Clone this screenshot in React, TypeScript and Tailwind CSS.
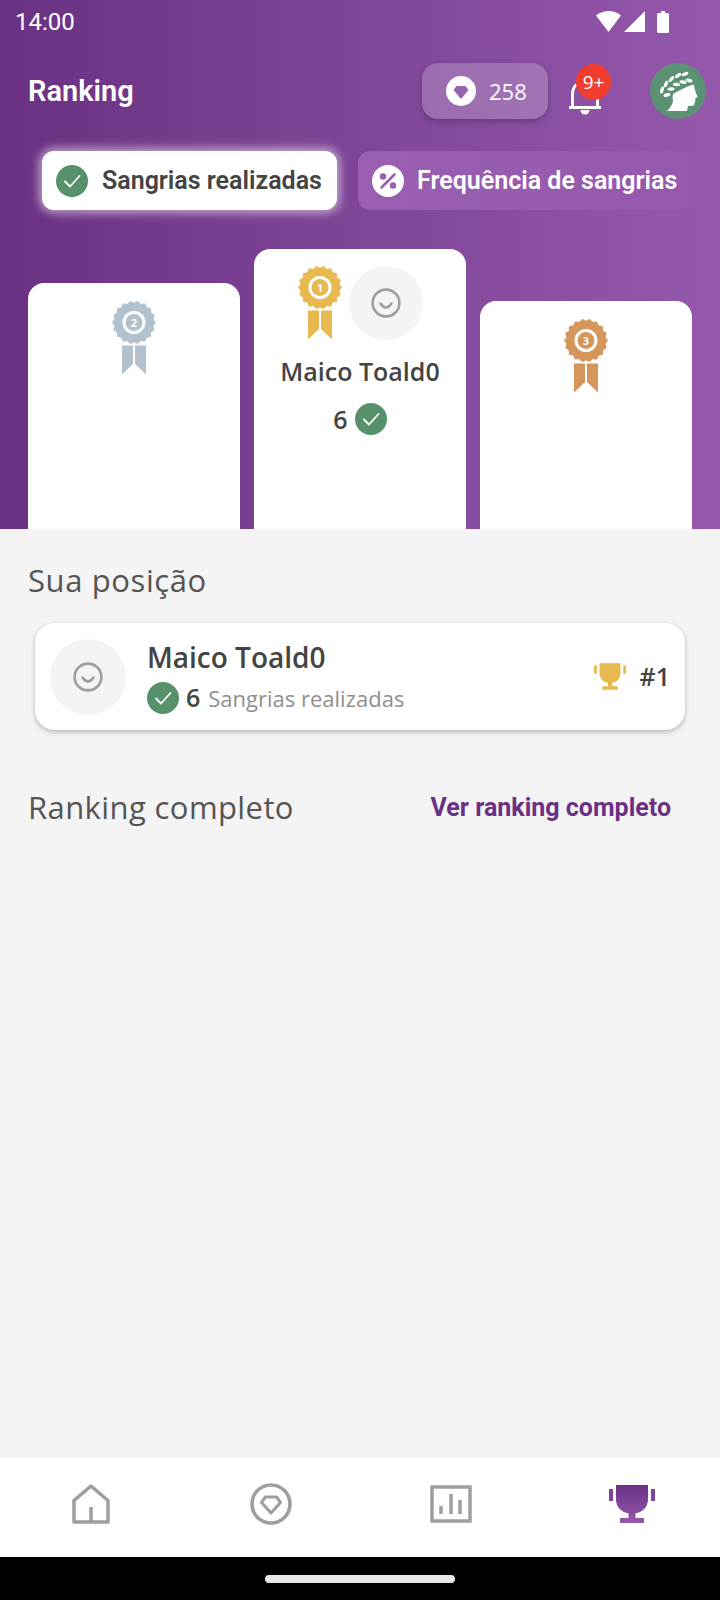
import React from 'react';

const roboto = "font-['Roboto',sans-serif]";
const soft = "font-['Open_Sans',sans-serif]";

// scalloped edge for the medals
const scallop = (cx: number, cy: number, r: number, bumps: number) => {
    const pts: string[] = [];
    for (let i = 0; i < bumps * 2; i++) {
        const a = (Math.PI * i) / bumps;
        const rr = i % 2 === 0 ? r : r - 2.2;
        pts.push(`${(cx + rr * Math.cos(a)).toFixed(2)},${(cy + rr * Math.sin(a)).toFixed(2)}`);
    }
    return pts.join(' ');
};

const Medal: React.FC<{ color: string; rank: number }> = ({ color, rank }) => (
    <svg width="44" height="74" viewBox="0 0 44 74" className="shrink-0">
        <path d="M10 44.500h11v18.500l-11 10.500z M23 44.500h11v29l-11-10.500z" fill={color} />
        <polygon points={scallop(22, 21.5, 21.5, 18)} fill={color} stroke={color} strokeWidth="1" strokeLinejoin="round" />
        <circle cx="22" cy="21.5" r="10" fill="none" stroke="#fff" strokeWidth="3" />
        <text x="22" y="25.500" textAnchor="middle" fontSize="11" fontWeight="700" fill="#fff" fontFamily="Open Sans, sans-serif">{rank}</text>
    </svg>
);

const CheckBadge: React.FC<{ size?: number }> = ({ size = 32 }) => (
    <svg width={size} height={size} viewBox="0 0 32 32" className="shrink-0">
        <circle cx="16" cy="16" r="16" fill="#56916c" />
        <path d="M9 16.500l5 5 9.500-10.500" fill="none" stroke="#fff" strokeWidth="1.800" strokeLinecap="round" strokeLinejoin="round" />
    </svg>
);

const Face: React.FC<{ size: number }> = ({ size }) => (
    <svg width={size} height={size} viewBox="0 0 30 30">
        <circle cx="15" cy="15" r="13.400" fill="none" stroke="#9e9e9e" strokeWidth="2.600" />
        <path d="M9.500 15.500q5.500 8 11 0" fill="none" stroke="#9e9e9e" strokeWidth="2.600" strokeLinecap="round" />
    </svg>
);

const TrophyIcon: React.FC<{ w: number; h: number; fill: string }> = ({ w, h, fill }) => (
    <svg width={w} height={h} viewBox="0 0 46 38">
        <path d="M8 0h30v14c0 8-5 13-12 14.500V33h8v5H12v-5h8v-4.500C13 27 8 22 8 14z" fill={fill} />
        <rect x="0" y="3" width="4" height="12" fill={fill} />
        <rect x="42" y="3" width="4" height="12" fill={fill} />
    </svg>
);

// laurel: outer row then inner row of leaves
const leaves = [
    [4, 20, -75], [8, 14, -65], [13.500, 9, -50], [20, 5.500, -35], [27, 4, -20],
    [9, 25, -15], [13, 19, -5], [18.500, 14.500, 5], [25, 12, 10], [31, 10.500, 15],
];

const Caesar = () => (
    <svg width="40" height="42" viewBox="0 0 40 42" fill="#fff">
        <path d="M15 24C22 20 30 16 36 14.500L36.500 18C37 21 39 25 39.500 27L37 28.500 37.500 31 36.500 32.500V34C36 36 34 36 30 36L29 41H9C11 39 14 36 15 31 14.500 28 14.500 26 15 24z" />
        {leaves.map(([x, y, r], i) => (
            <ellipse key={i} cx={x} cy={y} rx="3.600" ry="1.700" transform={`rotate(${r} ${x} ${y})`} />
        ))}
    </svg>
);

export default function App() {
    return (
        <div className={`w-[720px] h-[1600px] flex flex-col bg-[#f4f4f4] overflow-hidden ${soft}`}>
            <div className="h-[529px] flex flex-col bg-gradient-to-r from-[#6a3183] to-[#9559ac]">
                {/* status bar */}
                <div className="h-[44px] flex items-center justify-between pl-[15px] pr-[48px] text-white">
                    <span className={`${roboto} text-[24px] leading-none`}>14:00</span>
                    <svg width="76" height="24" viewBox="0 0 76 24" fill="#fff">
                        <path d="M0 5.500C3.500 2.500 8 1 12.500 1S21.500 2.500 25 5.500L12.500 22z" />
                        <path d="M28 22 L49 1 V22z" />
                        <path d="M61 4.500a1.500 1.500 0 0 1 1.500-1.500H65V1h4v2h2.500A1.500 1.500 0 0 1 73 4.500V21.500a1.500 1.500 0 0 1-1.500 1.500h-9a1.500 1.500 0 0 1-1.500-1.500z" />
                    </svg>
                </div>
                {/* title row */}
                <div className="mt-[19px] flex items-center pl-[28px] pr-[14px]">
                    <h1 className={`${roboto} text-[29px] font-semibold text-white leading-none`}>Ranking</h1>
                    <div className="ml-auto w-[126px] h-[56px] flex items-center pl-[24px] gap-[13px] rounded-[16px] bg-white/20 shadow-[0_3px_6px_rgba(0,0,0,0.22)]">
                        <svg width="30" height="30" viewBox="0 0 30 30">
                            <circle cx="15" cy="15" r="15" fill="#fff" />
                            <path d="M10.500 10h9l3 4-7.500 9-7.500-9z" fill="#9565ae" />
                        </svg>
                        <span className="text-[22px] font-medium text-white">258</span>
                    </div>
                    <div className="relative ml-[21px] w-[32px] h-[46px] mt-[6px]">
                        <svg width="32" height="36" viewBox="0 0 32 36" fill="none" className="absolute left-0 top-[8px]">
                            <path d="M3.500 28V15C3.500 7 9 3 16 3s12.500 4 12.500 12V28" stroke="#fff" strokeWidth="3" />
                            <path d="M0 28.500h32" stroke="#fff" strokeWidth="3" />
                            <path d="M11.500 31h9a4.500 4.500 0 0 1-9 0z" fill="#fff" />
                        </svg>
                        <span className="absolute left-[7px] top-[-7px] w-[35px] h-[36px] rounded-full bg-[#f03d30] flex items-center justify-center text-white text-[19px] leading-none">9+</span>
                    </div>
                    <div className="ml-[49px] w-[56px] h-[56px] rounded-full bg-[#5c9274] flex items-center justify-center shrink-0">
                        <Caesar />
                    </div>
                </div>
                {/* tabs */}
                <div className="mt-[32px] flex pl-[42px] gap-[21px]">
                    <div className="w-[295px] h-[59px] rounded-[12px] bg-white flex items-center pl-[14px] gap-[14px] shadow-[0_0_10px_3px_rgba(255,255,255,0.55)] shrink-0">
                        <CheckBadge />
                        <span className={`${roboto} text-[25px] font-semibold text-[#444] leading-none whitespace-nowrap`}>Sangrias realizadas</span>
                    </div>
                    <div className="w-[340px] h-[59px] rounded-[12px] bg-gradient-to-r from-[#9a5fb0] to-[#9559ac] flex items-center pl-[14px] gap-[13px] shrink-0">
                        <svg width="32" height="32" viewBox="0 0 32 32" className="shrink-0">
                            <circle cx="16" cy="16" r="16" fill="#fff" />
                            <path d="M9.500 22.500l13-13" stroke="#9a5fb0" strokeWidth="2.600" strokeLinecap="round" />
                            <circle cx="11" cy="11.500" r="3.200" fill="#9a5fb0" />
                            <circle cx="21" cy="20.500" r="3.200" fill="#9a5fb0" />
                        </svg>
                        <span className={`${roboto} text-[25px] font-semibold text-white leading-none whitespace-nowrap`}>Frequência de sangrias</span>
                    </div>
                </div>
                {/* podium */}
                <div className="flex-1 flex items-end gap-[14px] px-[28px]">
                    <div className="w-[212px] h-[246px] rounded-t-[16px] bg-white flex justify-center pt-[18px]">
                        <Medal color="#b1c1cd" rank={2} />
                    </div>
                    <div className="w-[212px] h-[280px] rounded-t-[16px] bg-white flex flex-col items-center pt-[17px]">
                        <div className="flex items-start gap-[7px]">
                            <Medal color="#e8b94f" rank={1} />
                            <div className="w-[74px] h-[74px] rounded-full bg-[#f4f4f4] flex items-center justify-center">
                                <Face size={30} />
                            </div>
                        </div>
                        <span className="mt-[16px] text-[25px] font-semibold text-[#444] leading-[30px] whitespace-nowrap">Maico Toald0</span>
                        <div className="mt-[17px] flex items-center gap-[7px]">
                            <span className="text-[25px] font-semibold text-[#444] leading-none">6</span>
                            <CheckBadge />
                        </div>
                    </div>
                    <div className="w-[212px] h-[228px] rounded-t-[16px] bg-white flex justify-center pt-[18px]">
                        <Medal color="#d5965c" rank={3} />
                    </div>
                </div>
            </div>

            <div className="flex-1 flex flex-col">
                <h2 className="mt-[32px] ml-[28px] text-[31px] font-normal tracking-[0.6px] leading-[38px] text-[#555]">Sua posição</h2>
                <div className="mt-[24px] mx-[35px] h-[107px] rounded-[20px] bg-white shadow-[0_2px_5px_rgba(0,0,0,0.25)] flex items-center pl-[15px] pr-[15px]">
                    <div className="w-[76px] h-[76px] rounded-full bg-[#f4f4f4] flex items-center justify-center shrink-0">
                        <Face size={30} />
                    </div>
                    <div className="ml-[21px] flex flex-col">
                        <span className="text-[28px] font-semibold text-[#444] leading-[34px] whitespace-nowrap">Maico Toald0</span>
                        <div className="mt-[8px] flex items-center">
                            <CheckBadge />
                            <span className="ml-[7px] text-[25px] font-semibold text-[#444] leading-none">6</span>
                            <span className="ml-[8px] text-[22px] text-[#8f8f8f] leading-none whitespace-nowrap">Sangrias realizadas</span>
                        </div>
                    </div>
                    <div className="ml-auto flex items-center gap-[14px]">
                        <TrophyIcon w={32} h={27} fill="#e8b94f" />
                        <span className="text-[25px] font-semibold text-[#444] leading-none">#1</span>
                    </div>
                </div>
                <div className="mt-[58px] pl-[28px] pr-[49px] flex items-center justify-between">
                    <h2 className="text-[31px] font-normal tracking-[0.4px] leading-[38px] text-[#555]">Ranking completo</h2>
                    <a className={`${roboto} text-[25px] font-bold text-[#6b2f85] leading-none`}>Ver ranking completo</a>
                </div>
            </div>

            {/* bottom nav */}
            <div className="h-[99px] bg-white grid grid-cols-4 items-center pb-[7px] pl-[2px]">
                <div className="flex justify-center pr-[2px]">
                    <svg width="38" height="40" viewBox="0 0 38 40" fill="none" stroke="#9e9e9e" strokeWidth="3.500" strokeLinejoin="round">
                        <path d="M2 16.500 19 2l17 14.500V38H2z" />
                        <path d="M19 38V23" />
                    </svg>
                </div>
                <div className="flex justify-center">
                    <svg width="42" height="42" viewBox="0 0 42 42" fill="none" stroke="#9e9e9e">
                        <circle cx="21" cy="21" r="19" strokeWidth="3.600" />
                        <path d="M15.500 14h11l4 5.500L21 30l-9.500-10.500z" strokeWidth="3" strokeLinejoin="round" />
                    </svg>
                </div>
                <div className="flex justify-center">
                    <svg width="42" height="38" viewBox="0 0 42 38" fill="none" stroke="#9e9e9e">
                        <rect x="2" y="2" width="38" height="34" strokeWidth="3.500" />
                        <path d="M11 29v-8M21 29V9M30 29V15" strokeWidth="3.500" />
                    </svg>
                </div>
                <div className="flex justify-center pl-[4px]">
                    <svg width="46" height="38" viewBox="0 0 46 38">
                        <defs>
                            <linearGradient id="cup" x1="0" y1="0" x2="0" y2="1">
                                <stop offset="0" stopColor="#6a3183" />
                                <stop offset="1" stopColor="#9559ac" />
                            </linearGradient>
                        </defs>
                        <path d="M7 0h32v14c0 8-5 13-12.500 14.500V33H35v5H11v-5h8.500v-4.500C12 27 7 22 7 14z" fill="url(#cup)" />
                        <rect x="0" y="4" width="4" height="12" fill="#7f4598" />
                        <rect x="42" y="4" width="4" height="12" fill="#7f4598" />
                    </svg>
                </div>
            </div>
            <div className="h-[43px] bg-black flex justify-center pt-[18px]">
                <div className="w-[190px] h-[8px] rounded-full bg-[#e8e8e8]" />
            </div>
        </div>
    );
}
